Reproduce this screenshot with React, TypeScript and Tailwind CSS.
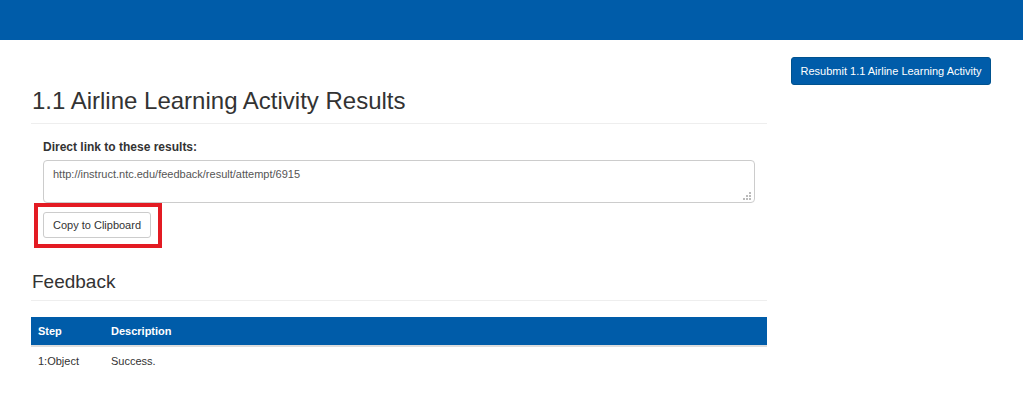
import React from "react";

const ResultsPage = () => {
  return (
    <div className="min-h-[403px] bg-white font-['Liberation_Sans',Arial,sans-serif] text-[#333]">
      {/* Top bar */}
      <div className="h-[40px] bg-[#005ca9]" />

      <div className="flex items-start">
        {/* Main column */}
        <div className="ml-[31px] w-[736px]">
          <h1 className="mt-[48px] pb-[9px] border-b border-[#eee] text-[24px] leading-[26px] font-normal pl-[1px]">
            1.1 Airline Learning Activity Results
          </h1>

          {/* Direct link */}
          <div className="px-[12px] mt-[15px]">
            <label className="block text-[12px] leading-[17px] font-bold mb-[4px]">
              Direct link to these results:
            </label>
            <div className="relative">
              <textarea
                readOnly
                defaultValue="http://instruct.ntc.edu/feedback/result/attempt/6915"
                className="block w-full h-[43px] resize-none border border-[#ccc] rounded-[4px] pl-[9px] pr-[9px] pt-[5px] text-[11px] leading-[16px] text-[#555] outline-none"
              />
              {/* resize grip */}
              <svg className="absolute right-[3px] bottom-[2px]" width="9" height="9" viewBox="0 0 9 9">
                <rect x="6" y="0" width="2" height="2" fill="#bbb" />
                <rect x="3" y="3" width="2" height="2" fill="#bbb" />
                <rect x="6" y="3" width="2" height="2" fill="#bbb" />
                <rect x="0" y="6" width="2" height="2" fill="#bbb" />
                <rect x="3" y="6" width="2" height="2" fill="#bbb" />
                <rect x="6" y="6" width="2" height="2" fill="#bbb" />
              </svg>
            </div>
            <div className="relative mt-[9px] w-[108px]">
              <button className="flex items-center justify-center w-[108px] h-[26px] pt-[1px] bg-white border border-[#ccc] rounded-[3px] text-[11px] text-[#333]">
                Copy to Clipboard
              </button>
              {/* highlight box */}
              <div className="absolute -left-[9px] -top-[9px] w-[128px] h-[45px] border-4 border-[#e31b23] pointer-events-none" />
            </div>
          </div>

          {/* Feedback */}
          <h2 className="mt-[33px] pb-[8px] border-b border-[#eee] text-[19px] leading-[21px] font-normal pl-[1px]">
            Feedback
          </h2>

          <div className="mt-[16px] text-[11px] leading-[16px]">
            <div className="flex bg-[#005ca9] text-white font-bold border-b-2 border-[#ddd]">
              <div className="w-[73px] px-[7px] py-[6px]">Step</div>
              <div className="flex-1 px-[7px] py-[6px]">Description</div>
            </div>
            <div className="flex">
              <div className="w-[73px] px-[7px] py-[6px]">1:Object</div>
              <div className="flex-1 px-[7px] py-[6px]">Success.</div>
            </div>
          </div>
        </div>

        {/* Right column */}
        <button className="ml-[24px] mt-[17px] h-[28px] w-[200px] flex items-center justify-center bg-[#005ca9] border border-[#00528f] rounded-[3px] text-[11px] text-white">
          Resubmit 1.1 Airline Learning Activity
        </button>
      </div>
    </div>
  );
};

export default ResultsPage;
